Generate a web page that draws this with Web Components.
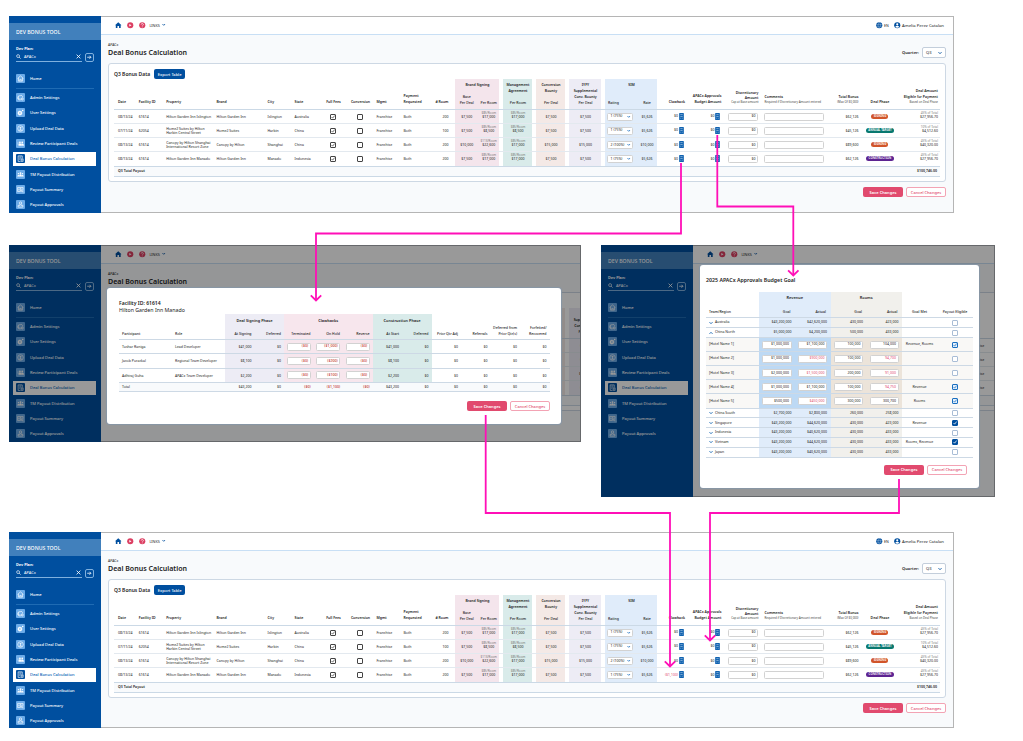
<!DOCTYPE html>
<html lang="en">
<head>
<meta charset="utf-8">
<title>Dev Bonus Tool</title>
<style>
  html, body { margin: 0; }
  body {
    width: 1023px;
    height: 741px;
    position: relative;
    overflow: hidden;
    background: #fff;
    font-family: "Noto Sans", "Open Sans", sans-serif;
    color: #333;
  }
  /* artboards on the free canvas */
  app-frame { position: absolute; }
  #start { left: 9px; top: 16px; width: 945px; height: 197px; }
  #clawback { left: 9px; top: 245px; width: 572px; height: 197px; }
  #budget { left: 601px; top: 245px; width: 394px; height: 252px; }
  #result { left: 9px; top: 532px; width: 945px; height: 196px; }
  flow-arrows { position: absolute; inset: 0; }
</style>
</head>
<body>
<app-frame id="start"></app-frame>

<app-frame id="clawback" dimmed peek=".lilac">
  <modal-dialog style="left:98px;top:43px;width:454px;height:136px">
    <span slot="title">Facility ID: 61614</span>
    <span slot="subtitle">Hilton Garden Inn Manado</span>
    <participant-table></participant-table>
  </modal-dialog>
</app-frame>

<app-frame id="budget" dimmed covered peek=".in">
  <modal-dialog compact style="left:99px;top:20px;width:279px;height:223px">
    <span slot="title">2025 APACx Approvals Budget Goal</span>
    <budget-table></budget-table>
  </modal-dialog>
</app-frame>

<app-frame id="result" adjusted></app-frame>
<flow-arrows></flow-arrows>

<script>
const icons = {
  house: '<path d="M12 1 0 12h3v10h6v-7h6v7h6V12h3z" fill="currentColor"/>',
  play: '<circle cx="12" cy="12" r="11.300" fill="currentColor"/><path d="M8.500 7l8 5-8 5z" fill="#fff"/>',
  help: '<circle cx="12" cy="12" r="11.300" fill="currentColor"/><path d="M8 9.500a4 4 0 1 1 5.500 3.700c-1.300.6-1.500 1-1.500 2.300M12 17.500v2.500" fill="none" stroke="#fff" stroke-width="2.500"/>',
  down: '<path d="M3 7l9 9 9-9" fill="none" stroke="currentColor" stroke-width="5.500"/>',
  up: '<path d="M3 17l9-9 9 9" fill="none" stroke="currentColor" stroke-width="5.500"/>',
  globe: '<circle cx="12" cy="12" r="11.300" fill="currentColor"/><path d="M1 9h22M1 15.500h22M12 1c-6 7-6 15 0 22M12 1c6 7 6 15 0 22" fill="none" stroke="#fff" stroke-width="1"/>',
  person: '<circle cx="12" cy="12" r="11.300" fill="currentColor"/><circle cx="12" cy="8.500" r="4" fill="#fff"/><path d="M4.500 18c3-5 12-5 15 0-4 4-11 4-15 0z" fill="#fff"/>',
  search: '<circle cx="10" cy="10" r="7" fill="none" stroke="currentColor" stroke-width="3"/><path d="M15 15l7 7" stroke="currentColor" stroke-width="3.500"/>',
  close: '<path d="M3 3l18 18M21 3L3 21" stroke="currentColor" stroke-width="4"/>',
  arrow: '<path d="M1 12h20M13 4l8 8-8 8" fill="none" stroke="currentColor" stroke-width="4"/>',
  home: '<path d="M2 12L12 3l10 9M5 10v11h14V10M9.500 21v-6h5v6" fill="none" stroke="currentColor" stroke-width="2.200"/>',
  admin: '<path d="M13 20H8a6 6 0 1 1 3-14 5 5 0 0 1 8 5" fill="none" stroke="currentColor" stroke-width="2.200"/><path d="M5 8v9h7" fill="none" stroke="currentColor" stroke-width="2"/><circle cx="18" cy="17" r="3.500" fill="none" stroke="currentColor" stroke-width="2.500"/>',
  gear: '<circle cx="10" cy="14" r="5" fill="none" stroke="currentColor" stroke-width="4.500"/><path d="M10 5v18M1 14h18M4 8l12 12M16 8L4 20" stroke="currentColor" stroke-width="2"/><circle cx="10" cy="14" r="2.500" fill="#6cabe8"/><circle cx="19.500" cy="5" r="2.500" fill="currentColor"/>',
  upload: '<circle cx="12" cy="12" r="9.500" fill="none" stroke="currentColor" stroke-width="2.200"/><path d="M12 17V7M8 11l4-4 4 4M7 17.500h10" fill="none" stroke="currentColor" stroke-width="2.200"/>',
  review: '<circle cx="10" cy="8" r="3" fill="currentColor"/><circle cx="18" cy="8" r="3" fill="currentColor"/><path d="M1 10h5M1 14h4M6 19v-3c0-5 8-5 8 0v3zM15 19v-6c5-1 8 1 8 6z" fill="currentColor" stroke="currentColor" stroke-width="1.500"/>',
  calc: '<path d="M4 22V3h14v8M4 22h8M8 7h7M8 11h5M8 15h3" fill="none" stroke="currentColor" stroke-width="2.200"/><path d="M14 13h7v9h-7zM14 17h7" fill="none" stroke="currentColor" stroke-width="2"/>',
  team: '<circle cx="5" cy="9" r="2.500" fill="currentColor"/><circle cx="12" cy="7" r="3" fill="currentColor"/><circle cx="19" cy="9" r="2.500" fill="currentColor"/><path d="M1 19c0-7 6-7 7-3 0-6 8-6 8 0 1-4 7-4 7 3z" fill="currentColor"/>',
  summary: '<path d="M2 5h19v8M2 5v14h11M6 9v6M10 9h4v6h-4zM18 9v3" fill="none" stroke="currentColor" stroke-width="2.200"/><circle cx="18" cy="17" r="3" fill="none" stroke="currentColor" stroke-width="2"/><path d="M20 19l3 3" stroke="currentColor" stroke-width="2"/>',
  approve: '<circle cx="12" cy="7" r="4" fill="none" stroke="currentColor" stroke-width="2.200"/><path d="M10 11v4H4v6h16v-6h-6v-4" fill="none" stroke="currentColor" stroke-width="2.200"/>',
  sheet: '<rect x="4" y="0" width="16" height="24" rx="2" fill="currentColor"/><path d="M8 5.500h8M8 12h8M8 18h3M13.500 18H16" fill="none" stroke="#fff" stroke-width="1.500"/>'
};

// attaches an open shadow root holding the given styles and markup
function render(host, css, html) {
  const root = host.shadowRoot || host.attachShadow({ mode: 'open' });
  root.innerHTML = `<style>*{box-sizing:border-box}${css}</style>${html}`;
}

customElements.define('ui-icon', class extends HTMLElement {
  connectedCallback() {
    render(this, `
      :host { display: inline-block; flex: none; width: 6px; height: 6px; }
      svg { display: block; width: 100%; height: 100%; overflow: visible; }
    `, `<svg viewBox="0 0 24 24">${icons[this.getAttribute('name')]}</svg>`);
  }
});

customElements.define('ui-button', class extends HTMLElement {
  connectedCallback() {
    render(this, `
      :host {
        display: flex; align-items: center; justify-content: center; flex: none;
        box-sizing: border-box; width: 40px; height: 10px; border-radius: 2px;
        background: #e14a6e; color: #fff; font-size: 4px; font-weight: 600; line-height: 5px;
        white-space: nowrap;
      }
      :host([outline]) { background: #fff; color: #e14a6e; border: 1px solid #f3a3b4; font-weight: 500; }
      :host([blue]) { background: #004f9f; width: 31px; font-weight: 500; }
    `, '<slot></slot>');
  }
});

customElements.define('ui-check', class extends HTMLElement {
  connectedCallback() {
    const tick = this.hasAttribute('on') ? '<path d="M2 4l1.500 1.500L6.300 2" fill="none" stroke="currentColor" stroke-width="1"/>' : '';
    render(this, `
      :host {
        display: block; flex: none; box-sizing: border-box; width: 6px; height: 6px;
        border: 1px solid #444; border-radius: 1px; background: #fff; color: #444;
      }
      :host([soft]) { border-color: #a9bdd6; }
      :host([soft][on]) { border-color: #1a6fc0; color: #1a6fc0; background: #e4f0fc; }
      :host([solid][on]) { border-color: #004f9f; background: #004f9f; color: #fff; }
      svg { display: block; width: 6px; height: 6px; margin: -1px; }
    `, `<svg viewBox="0 0 8 8">${tick}</svg>`);
  }
});

customElements.define('side-nav', class extends HTMLElement {
  connectedCallback() {
    const items = [
      ['admin', 'Admin Settings'], ['gear', 'User Settings'], ['upload', 'Upload Deal Data'],
      ['review', 'Review Participant Deals'], ['calc', 'Deal Bonus Calculation'],
      ['team', 'TM Payout Distribution'], ['summary', 'Payout Summary'], ['approve', 'Payout Approvals']
    ];
    const link = ([icon, text]) => `
      <a class="${icon === 'calc' ? 'active' : ''}"><span class="tile"><ui-icon name="${icon}"></ui-icon></span>${text}</a>`;
    render(this, `
      :host { display: flex; flex-direction: column; width: 92px; background: #004f9f; color: #fff; font-size: 4px; }
      .brand {
        margin-top: 7px; height: 17px; padding-left: 7px; flex: none;
        display: flex; align-items: center; background: #4180bc;
        font-size: 5.2px; font-weight: 500;
      }
      .plan { padding: 6px 7px 0; height: 31px; flex: none; }
      .plan b { display: block; font-size: 3.8px; line-height: 6px; font-weight: 700; }
      .search { display: flex; gap: 3px; align-items: center; height: 10px; }
      .field {
        width: 66px; height: 10px; display: flex; align-items: center; gap: 3px;
        border-bottom: 1px solid #7fb0de; font-size: 4px;
      }
      .field ui-icon { width: 5px; height: 5px; }
      .field ui-icon:last-child { margin-left: auto; margin-right: 1px; }
      .go {
        width: 9px; height: 9px; border: 1px solid #7fb0de; border-radius: 2px;
        display: flex; align-items: center; justify-content: center;
      }
      .go ui-icon { width: 4.500px; height: 4.500px; }
      a {
        display: flex; align-items: center; gap: 5px; flex: none; height: 14px;
        margin: 0 5px 1.340px 4px; padding-left: 3px; font-size: 4.050px; font-weight: 500; white-space: nowrap;
      }
      .tile {
        width: 9px; height: 9px; border-radius: 1px; background: #6cabe8;
        display: flex; align-items: center; justify-content: center;
      }
      .tile ui-icon { width: 7px; height: 7px; }
      .active { background: #fff; color: #005db3; }
      .active .tile { background: #004f9f; color: #fff; }
      hr { margin: 1.500px 7px 1.600px; border: 0; height: 1px; background: #1f6bb3; flex: none; }
    `, `
      <div class="brand">DEV BONUS TOOL</div>
      <div class="plan">
        <b>Dev Plan:</b>
        <div class="search">
          <div class="field"><ui-icon name="search"></ui-icon>APACx<ui-icon name="close"></ui-icon></div>
          <div class="go"><ui-icon name="arrow"></ui-icon></div>
        </div>
      </div>
      ${link(['home', 'Home'])}
      <hr>
      ${items.map(link).join('')}
    `);
  }
});

customElements.define('top-bar', class extends HTMLElement {
  connectedCallback() {
    render(this, `
      :host {
        display: flex; align-items: center; box-sizing: border-box; height: 19px; padding: 0 9px 0 14px;
        background: #fff; border-bottom: 1px solid #c8dff5; font-size: 4.250px; color: #222;
      }
      ui-icon { width: 6.500px; height: 6.500px; margin-right: 5.300px; }
      .blue { color: #004f9f; }
      .red { color: #dc3f62; }
      .red + .links { margin-left: -1px; }
      .links { font-size: 3.700px; }
      .caret { width: 3.500px; height: 3.500px; margin: 0 0 0 2px; }
      .user { margin-left: auto; display: flex; align-items: center; }
      .user ui-icon { margin-right: 1.700px; }
      .lang { font-size: 3.600px; margin-right: 5px; }
      :host([short]) .user { display: none; }
    `, `
      <ui-icon class="blue" name="house"></ui-icon>
      <ui-icon class="red" name="play"></ui-icon>
      <ui-icon class="red" name="help"></ui-icon>
      <span class="links">LINKS</span><ui-icon class="blue caret" name="down"></ui-icon>
      <div class="user">
        <ui-icon class="blue" name="globe"></ui-icon><span class="lang">EN</span>
        <ui-icon class="blue" name="person"></ui-icon><span>Amelia Perez Catalan</span>
      </div>
    `);
  }
});

const tableCss = `
  :host { display: block; font-size: 3.500px; line-height: 4.600px; color: #222; }
  .row { display: grid; grid-template-columns: var(--cols); border-bottom: 1px solid #e3e9ef; }
  .head { border-bottom-color: #cbd9e6; font-weight: 600; }
  .cell { display: flex; flex-direction: column; justify-content: center; white-space: nowrap; min-width: 0; }
  .head .cell { justify-content: flex-end; }
  .r { align-items: flex-end; text-align: right; }
  .c { align-items: center; text-align: center; }
  .total { background: #f8fafc; border-bottom-color: #cbd9e6; }
  .box {
    border: 1px solid #d2d2d2; border-radius: 1.500px; background: #fff; height: 8px;
    display: flex; align-items: center; justify-content: flex-end; padding: 0 2px;
  }
  .red { color: #c11f1b; }
  .group { grid-row: 1; text-align: center; line-height: 6px; padding-top: 3.600px; }
`;

customElements.define('deal-table', class extends HTMLElement {
  connectedCallback() {
    const claw = this.hasAttribute('adjusted') ? '<span class="neg">($1,100)</span>' : '$0';
    const rows = [
      ['08/13/24', '61614', 'Hilton Garden Inn Islington', 'Hilton Garden Inn', 'Islington', 'Australia', '200', '$7,500', '$85', '$17,000', '$7,500', '1 (75%)', '$5,626', '$62,126', 'signing', '45%', '$27,956.70'],
      ['07/11/24', '62054', 'Home2 Suites by Hilton<br>Harbin Central Street', 'Home2 Suites', 'Harbin', 'China', '100', '$7,500', '$85', '$8,500', '$7,500', '1 (75%)', '$5,626', '$45,126', 'annual target', '10%', '$4,512.60'],
      ['08/13/24', '61614', 'Canopy by Hilton Shanghai<br>International Resort Zone', 'Canopy by Hilton', 'Shanghai', 'China', '200', '$10,000', '$113', '$22,600', '$15,000', '2 (100%)', '$10,000', '$89,600', 'signing', '45%', '$40,320.00'],
      ['08/13/24', '61614', 'Hilton Garden Inn Manado', 'Hilton Garden Inn', 'Manado', 'Indonesia', '200', '$7,500', '$85', '$17,000', '$7,500', '1 (75%)', '$5,626', '$62,126', 'construction', '45%', '$27,956.70']
    ];
    const cell = (cls, html) => `<div class="cell ${cls}">${html}</div>`;
    const body = rows.map((r, i) => `<div class="row data">
      ${cell('', r[0])}${cell('', r[1])}${cell('tight', r[2])}${cell('', r[3])}${cell('', r[4])}${cell('', r[5])}
      ${cell('c', '<ui-check on></ui-check>')}${cell('c', '<ui-check></ui-check>')}
      ${cell('in', 'Franchise')}${cell('', 'Both')}${cell('r', r[6])}<i></i>
      ${cell('c pink', r[7])}${cell('c pink', `<small>${r[8]}/Room</small>${r[9]}`)}<i></i>
      ${cell('c teal', `<small>$85/Room</small>${i === 1 ? '$8,500' : '$17,000'}`)}<i></i>
      ${cell('c sand', r[10])}<i></i>${cell('c lilac', r[10])}<i></i>
      ${cell('blue', `<div class="box pick">${r[11]}<ui-icon name="down"></ui-icon></div>`)}${cell('c blue', r[12])}
      ${cell('r', `<span class="money">${i === 3 ? claw : '$0'}<ui-icon name="sheet"></ui-icon></span>`)}
      ${cell('r', '<span class="money">$0<ui-icon name="sheet"></ui-icon></span>')}
      ${cell('', '<div class="box disc">$0</div>')}<i></i>
      ${cell('', '<div class="box"></div>')}${cell('r', r[13])}
      ${cell('c', `<span class="phase ${r[14].slice(0, 3)}">${r[14].toUpperCase()}</span>`)}
      ${cell('r', `<small>${r[15]} of Total</small>${r[16]}`)}
    </div>`).join('');
    const group = (cls, top, bottom) => `<div class="cell c ${cls} stack"><div>${top}</div><span>${bottom}</span></div>`;
    render(this, tableCss + `
      :host {
        --cols: 20.8px 27.4px 50.3px 51px 27px 27px 24px 30px 28px 27px 18px 7px 22.5px 21.5px 4px
          29px 4px 29px 4px 32px 4px 31px 21px 27.5px 36.5px 37px 6px 60px 34px 43px 36.5px;
      }
      .row { padding: 0 3px 0 4px; }
      .head { height: 31px; line-height: 6px; font-size: 3.500px; }
      .head .cell { padding-bottom: 4px; }
      .head .stack { justify-content: space-between; padding: 3px 0; }
      .head .stack span { font-weight: 500; }
      .data { height: 14.150px; font-size: 3.500px; }
      .data .cell:not(:has(.box, ui-check, .phase, ui-icon)) { padding-top: 1px; }
      .data:nth-last-child(2) { border-bottom-color: #cbd9e6; }
      .tight { line-height: 4.600px; }
      .in { padding-left: 1px; }
      .pink { background: #f4e5ec; }
      .teal { background: #d9ebea; }
      .sand { background: #f4e9e6; }
      .lilac { background: #edecf5; }
      .blue { background: #e0ecfa; }
      small { font-size: 3px; line-height: 4px; height: 4px; margin-top: -4px; color: #777; }
      .head small { margin: 0; font-size: 2.900px; font-weight: 400; color: #444; line-height: 5px; height: 5px; }
      .pair { grid-column: span 2; display: grid; grid-template: 12px 1fr / 22.5px 21.5px; padding: 3px 0; text-align: center; }
      .pair.sim { grid-template-columns: 31px 21px; }
      .pair div { grid-column: span 2; }
      .pair span { align-self: end; font-weight: 500; }
      .pair.sim span:nth-child(2) { text-align: left; padding-left: 2.500px; }
      .pick { margin-left: 2px; width: 26px; padding-right: 1.500px; justify-content: space-between; color: #222; }
      .pick ui-icon { width: 3.500px; height: 3.500px; color: #1a6fc0; }
      .money { display: flex; align-items: center; margin-right: 0; }
      .money ui-icon { width: 7px; height: 7px; color: #1062b0; }
      .neg { color: #e14a6e; }
      .disc { margin-left: 7px; }
      .phase {
        min-width: 17px; height: 5px; border-radius: 3px; padding: 0 2px; line-height: 5px;
        background: #d1552a; color: #fff; font-size: 2.900px; font-weight: 600;
      }
      .phase.ann, .phase.con { min-width: 28px; }
      .phase.ann { background: #08786f; }
      .phase.con { background: #5d2391; }
      .total { display: flex; justify-content: space-between; align-items: center; height: 10px; font-weight: 600; font-size: 3.500px; }
    `, `
      <div class="row head">
        ${['Date', 'Facility ID', 'Property', 'Brand', 'City', 'State'].map(t => cell('', t)).join('')}
        ${cell('c', 'Full Fees')}${cell('c', 'Conversion')}${cell('in', 'Mgmt')}${cell('', 'Payment<br>Requested')}${cell('r', '# Room')}<i></i>
        <div class="pair pink"><div>Brand Signing</div><span>Base<br>Per Deal</span><span>Per Room</span></div><i></i>
        ${group('teal', 'Management<br>Agreement', 'Per Room')}<i></i>
        ${group('sand', 'Conversion<br>Bounty', 'Per Deal')}<i></i>
        ${group('lilac', 'IYFY<br>Supplemental<br>Conv. Bounty', 'Per Deal')}<i></i>
        <div class="pair sim blue"><div>SIM</div><span>Rating</span><span>Rate</span></div>
        ${cell('r', 'Clawback')}${cell('r', 'APACx Approvals<br>Budget Amount')}
        ${cell('r', '<span style="line-height:5px">Discretionary<br>Amount</span><small>Cap at Base amount</small>')}<i></i>
        ${cell('', 'Comments<small>Required if Discretionary Amount entered</small>')}
        ${cell('r', 'Total Bonus<small>(Max Of $0,000)</small>')}${cell('c', 'Deal Phase')}
        ${cell('r', 'Deal Amount<br>Eligible for Payment<small>Based on Deal Phase</small>')}
      </div>
      ${body}
      <div class="row total"><span>Q3 Total Payout</span><span>$100,746.00</span></div>
    `);
    // behind a dialog only the cells that show past its edge keep their content
    const peek = this.getAttribute('peek');
    if (peek) {
      this.shadowRoot.querySelectorAll('.cell, .pair, .total').forEach(el => {
        if (!el.matches(peek)) el.replaceChildren();
      });
    }
  }
});

customElements.define('participant-table', class extends HTMLElement {
  connectedCallback() {
    const rows = [
      ['Tushar Raniga', 'Lead Developer', '$41,000', '($0)', '($1,000)', '($0)', '$41,000'],
      ['Jacob Purackal', 'Regional Team Developer', '$8,100', '($0)', '($200)', '($0)', '$8,100'],
      ['Adhiraj Guha', 'APACx Team Developer', '$2,200', '($0)', '($100)', '($0)', '$2,200'],
      ['Total', '', '$43,200', '($0)', '($1,100)', '($0)', '$43,200']
    ];
    const num = (cls, v) => `<div class="cell r ${cls}">${v}</div>`;
    const line = (r, i) => {
      const sum = i === 3;
      const claw = v => `<div class="cell pink red ${sum ? 'r' : ''}">${sum ? v : `<div class="box">${v}</div>`}</div>`;
      return `<div class="row ${sum ? 'total' : 'data'}">
        <div class="cell">${r[0]}</div><div class="cell">${r[1]}</div>
        ${num('lilac', r[2])}${num('lilac', '$0')}
        ${claw(r[3])}${claw(r[4])}${claw(r[5])}
        ${num('teal', r[6])}${num('teal', '$0')}
        ${num('', '$0').repeat(4)}
      </div>`;
    };
    render(this, tableCss + `
      :host { --cols: 53px 50px 29.500px 29.500px 29.500px 29.500px 29.500px 29.500px 29.500px 29.500px 29.500px 29.500px 29.500px; }
      .row { padding-left: 3px; height: 14.250px; border-bottom-color: #cdd9e5; }
      .r { padding-right: 3px; }
      .head { height: 26px; grid-template-rows: 13px 12px; }
      .head .cell { grid-row: 2; padding-bottom: 2.500px; line-height: 5.800px; font-weight: 500; }
      .data .cell:not(:has(.box)) { padding-top: 1.500px; }
      .total .cell { padding-top: 1px; }
      .group { font-size: 3.900px; }
      .box { margin: 0 3px 0 2.500px; padding: 0 1.500px; }
      .red { font-weight: 500; }
      .lilac { background: #edecf5; }
      .pink { background: #f7e6ed; }
      .teal { background: #d9ebea; }
      .total { height: 9.500px; }
      .total .cell { background: none; }
    `, `
      <div class="row head">
        <div class="group lilac" style="grid-column:3/5">Deal Signing Phase</div>
        <div class="group pink" style="grid-column:5/8">Clawbacks</div>
        <div class="group teal" style="grid-column:8/10">Construction Phase</div>
        <div class="cell" style="grid-column:1">Participant</div><div class="cell">Role</div>
        ${num('lilac', 'At Signing')}${num('lilac', 'Deferred')}
        ${num('pink', 'Terminated')}${num('pink', 'On Hold')}${num('pink', 'Reverse')}
        ${num('teal', 'At Start')}${num('teal', 'Deferred')}
        ${num('', 'Prior Qtr Adj')}${num('', 'Referrals')}${num('', 'Deferred from<br>Prior Qtr(s)')}${num('', 'Forfeited/<br>Recovered')}
      </div>
      ${rows.map(line).join('')}
    `);
  }
});

customElements.define('budget-table', class extends HTMLElement {
  connectedCallback() {
    // a leading "!" marks an actual below its goal
    const rows = [
      ['Australia', '$43,200,000', '$42,620,000', '430,000', '423,000', '', ''],
      ['China North', '$5,000,000', '$4,200,000', '500,000', '433,000', '', ''],
      ['[Hotel Name 1]', '$1,000,000', '$1,100,000', '100,000', '104,000', 'Revenue, Rooms', 'on'],
      ['[Hotel Name 2]', '$1,000,000', '!$900,000', '100,000', '!94,700', '', ''],
      ['[Hotel Name 3]', '$2,000,000', '!$1,500,000', '200,000', '!91,000', '', ''],
      ['[Hotel Name 4]', '$1,000,000', '$1,100,000', '100,000', '!94,750', 'Revenue', 'on'],
      ['[Hotel Name 5]', '$500,000', '!$450,000', '300,000', '300,700', 'Rooms', 'on'],
      ['China South', '$2,700,000', '$2,800,000', '260,000', '258,000', '', ''],
      ['Singapore', '$43,200,000', '$44,620,000', '430,000', '423,000', 'Revenue', 'on solid'],
      ['Indonesia', '$43,200,000', '$40,620,000', '430,000', '433,000', '', ''],
      ['Vietnam', '$43,200,000', '$44,620,000', '430,000', '433,000', 'Rooms, Revenue', 'on solid'],
      ['Japan', '$43,200,000', '$40,620,000', '430,000', '433,000', '', '']
    ];
    const line = r => {
      const hotel = r[0][0] === '[';
      const value = (v, tint) => {
        const text = v.replace('!', '');
        return hotel
          ? `<div class="cell ${tint}"><div class="box ${v[0] === '!' ? 'low' : ''}">${text}</div></div>`
          : `<div class="cell r ${tint}">${text}</div>`;
      };
      const mark = hotel ? '' : `<ui-icon name="${r[0] === 'China North' ? 'up' : 'down'}"></ui-icon>`;
      return `<div class="row ${hotel ? 'hotel' : ''}">
        <div class="cell name">${mark}${r[0]}</div>
        ${value(r[1], 'rev')}${value(r[2], 'rev')}${value(r[3], 'room')}${value(r[4], 'room')}
        <div class="cell c">${r[5]}</div><div class="cell c"><ui-check soft ${r[6]}></ui-check></div>
      </div>`;
    };
    render(this, tableCss + `
      :host { --cols: 53px 36px 35.500px 36px 35.500px 35px 36px; }
      .row { height: 9.800px; border-bottom-color: #cdd9e5; }
      .head { height: 26px; grid-template-rows: 13px 12px; }
      .head .cell { grid-row: 2; padding-bottom: 3px; line-height: 5.800px; font-weight: 500; }
      .head .r { padding-right: 4.500px; }
      .head .name { padding-left: 3px; }
      .group { font-size: 3.900px; padding-top: 2.800px; }
      .name { flex-direction: row; justify-content: flex-start !important; align-items: center; gap: 2px; padding-left: 3px; }
      .head .name { align-items: flex-end; }
      .name ui-icon { width: 4px; height: 4px; color: #1062b0; }
      .r { padding-right: 3.500px; }
      .hotel { height: 14.140px; background: #f9f8f6; }
      .rev { background: #e0ecfa; }
      .room { background: #f1f0ec; }
      .hotel .rev { background: #bdd9f4; }
      .hotel .room { background: #ece4da; }
      .box { margin: 0 3.500px 0 3px; padding-right: 1.500px; }
      .low { color: #e14a6e; }
    `, `
      <div class="row head">
        <div class="group rev" style="grid-column:2/4">Revenue</div>
        <div class="group room" style="grid-column:4/6">Rooms</div>
        <div class="cell name" style="grid-column:1">Team/Region</div>
        <div class="cell r rev">Goal</div><div class="cell r rev">Actual</div>
        <div class="cell r room">Goal</div><div class="cell r room">Actual</div>
        <div class="cell c">Goal Met</div><div class="cell c">Payout Eligible</div>
      </div>
      ${rows.map(line).join('')}
    `);
  }
});

customElements.define('modal-dialog', class extends HTMLElement {
  connectedCallback() {
    render(this, `
      :host {
        position: absolute; display: flex; flex-direction: column; box-sizing: border-box;
        padding: 12px 11px 0 12px; background: #fff; border-radius: 3px; box-shadow: 0 0 1px 1px #8796a6;
      }
      .titles { height: 14px; display: flex; flex-direction: column; font-size: 5.250px; line-height: 7.300px; color: #222; }
      ::slotted([slot="title"]) { font-weight: 600; font-size: 5.100px; }
      .actions { display: flex; justify-content: flex-end; gap: 3px; margin-top: 9.200px; }
      :host([compact]) { padding: 12px 6px 0; }
      :host([compact]) .titles { height: 15.400px; }
      :host([compact]) ::slotted([slot="title"]) { font-size: 5.250px; }
      :host([compact]) .actions { margin: 7.400px 6px 0 0; }
    `, `
      <div class="titles"><slot name="title"></slot><slot name="subtitle"></slot></div>
      <slot></slot>
      <div class="actions"><ui-button>Save Changes</ui-button><ui-button outline>Cancel Changes</ui-button></div>
    `);
  }
});

customElements.define('app-frame', class extends HTMLElement {
  connectedCallback() {
    const dimmed = this.hasAttribute('dimmed');
    const heading = `
      <div><div class="crumb">APACx</div><h1>Deal Bonus Calculation</h1></div>
      ${dimmed ? '' : '<div class="quarter">Quarter:<div class="select">Q3<ui-icon name="down"></ui-icon></div></div>'}`;
    render(this, `
      :host { display: block; overflow: hidden; }
      .shell { display: grid; grid-template-columns: 92px 852px; height: 100%; width: 944px; }
      main { background: #f8fafc; }
      .page { padding: 0 7px 0 7px; }
      .heading { height: 28px; display: flex; justify-content: space-between; padding-top: 7px; color: #222; }
      .crumb { font-size: 3.500px; line-height: 5px; }
      h1 { margin: 1px 0 0; font-size: 7.050px; line-height: 9px; font-weight: 600; }
      .quarter { display: flex; align-items: center; gap: 3px; height: 21px; font-size: 4.100px; font-weight: 600; }
      .select {
        width: 24px; height: 11px; border: 1px solid #c3cedb; border-radius: 2px; background: #fff;
        display: flex; align-items: center; justify-content: space-between; padding: 0 3px; font-weight: 400;
      }
      .select ui-icon { width: 4px; height: 4px; color: #004f9f; }
      .card { height: 119px; padding: 0 5px; border: 1px solid #cdd8e4; border-radius: 3px; background: #fff; }
      .title { display: flex; align-items: center; gap: 4px; height: 15px; padding-top: 5px; font-size: 5px; font-weight: 600; color: #222; }
      .actions { display: flex; justify-content: flex-end; gap: 3px; margin-top: 5px; }
      .shade { position: absolute; inset: 0; background: rgba(0, 0, 0, .4); }
      .edge { position: absolute; inset: 0 0 0 92px; border: 1px solid #b5b5b5; border-left: 0; }
      :host([dimmed]) .edge { border-color: #66686b; }
    `, `
      <div class="shell">
        <side-nav></side-nav>
        <main>
          <top-bar ${dimmed ? 'short' : ''}></top-bar>
          <div class="page">
            <div class="heading">${this.hasAttribute('covered') ? '' : heading}</div>
            <div class="card">
              <div class="title">${dimmed ? '' : 'Q3 Bonus Data<ui-button blue>Export Table</ui-button>'}</div>
              <deal-table ${this.hasAttribute('adjusted') ? 'adjusted' : ''} ${dimmed ? `peek="${this.getAttribute('peek')}"` : ''}></deal-table>
            </div>
            ${dimmed ? '' : '<div class="actions"><ui-button>Save Changes</ui-button><ui-button outline>Cancel Changes</ui-button></div>'}
          </div>
        </main>
      </div>
      ${dimmed ? '<div class="shade"></div>' : ''}
      <div class="edge"></div>
      <slot></slot>
    `);
  }
});

customElements.define('flow-arrows', class extends HTMLElement {
  connectedCallback() {
    // [path, tip x, tip y]
    const flows = [
      ['M681 163V233.500H316V300', 316, 300.500],
      ['M717.300 135V206.500H793.300V275', 793.300, 275.500],
      ['M485.700 415V513H670V666', 670, 666.500],
      ['M899 479V513H710V640', 710, 640.500]
    ];
    render(this, `
      :host { display: block; pointer-events: none; }
      path { fill: none; stroke: #ff0fb7; stroke-width: 1.800; }
    `, `<svg width="1023" height="741">${flows.map(([d, x, y]) =>
      `<path d="${d}"/><path d="M${x - 5.2} ${y - 5.2}L${x} ${y}L${x + 5.2} ${y - 5.2}"/>`).join('')}</svg>`);
  }
});
</script>
</body>
</html>
